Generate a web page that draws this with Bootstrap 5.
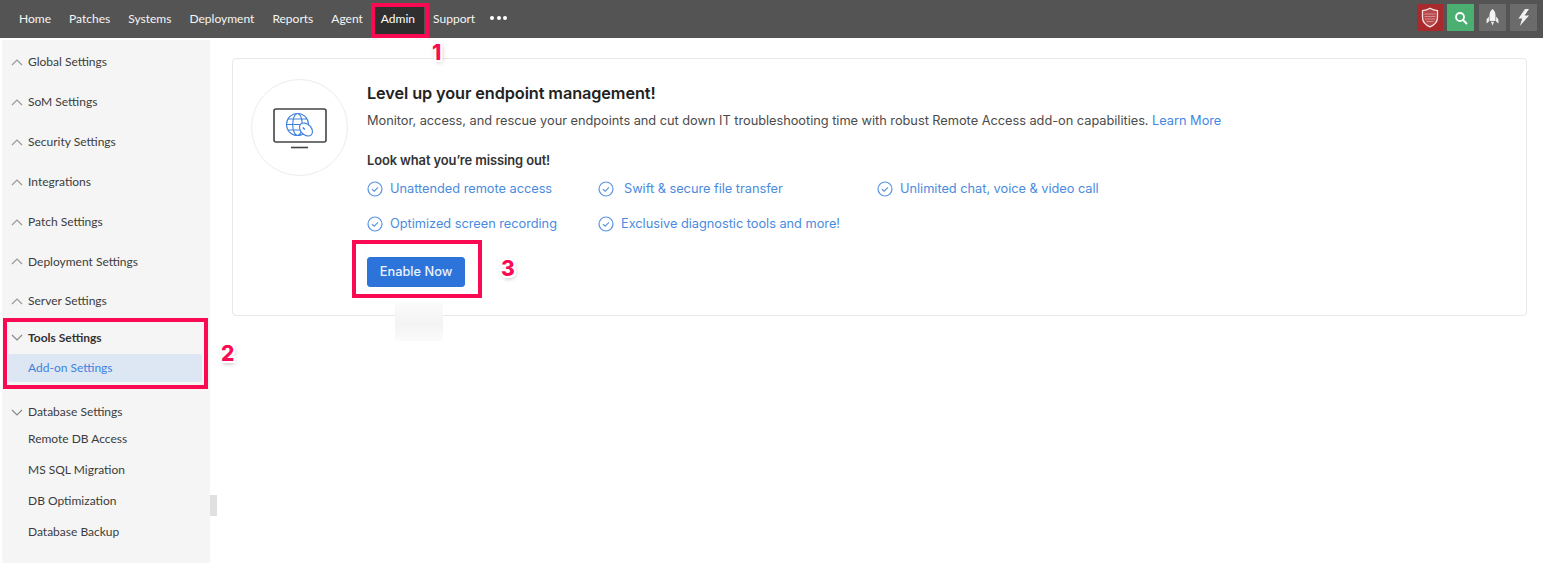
<!DOCTYPE html>
<html lang="en">
<head>
<meta charset="utf-8">
<title>Add-on Settings</title>
<link href="https://cdn.jsdelivr.net/npm/bootstrap@5.3.0/dist/css/bootstrap.min.css" rel="stylesheet">
<style>
html,body{height:563px;overflow:hidden;background:#fff}
body{font-family:"Lato","Liberation Sans",sans-serif;position:relative}
.topbar{height:38px;background:#545454;padding:0 6px 0 10px}
.topnav-link{color:#f4f4f4;font-size:12.02px;padding:0 9px;height:30px;margin-top:4px;line-height:29px;text-decoration:none}
.topnav-link.is-on{background:#2f2f2f;color:#fff}
.dots{display:flex;gap:2.5px;padding:0 6px;margin-top:-3px}
.dots i{width:4px;height:4px;border-radius:50%;background:#fff}
.tool-btn{width:27px;height:27px;background:#6b6b6b;margin-left:4px}
.tool-red{background:#a82a2c;width:26px}
.tool-green{background:#4caf72;margin-right:1px}
.page{height:525px}
.sidebar{width:208px;margin:2px 0 0 2px;background:#f5f5f5;height:523px;flex:none;padding-top:2px}
.side-head{height:40px;padding-left:9px;font-size:12px;color:#3c3c3c}
.side-head svg{flex:none;margin-right:5px}
.side-head.is-short{height:39px}
.side-head.is-tools{height:33px;font-weight:700;color:#333}
.side-head.is-db{height:28px;margin-top:16px}
.side-sub{height:31px;padding-left:26px;font-size:12px;color:#3c3c3c}
.side-sub.is-on{height:28px;margin:0 8px 0 6px;padding-left:20px;background:#dde6f3;color:#3d82de;border-radius:2px}
.side-sub.is-first{margin-top:-3px}
.main-area{padding:20px 16px 0 22px}
.promo{height:258px;border:1px solid #e8e8e8;border-radius:4px;padding:20px 18px;background:#fff;font-family:"Inter","Noto Sans",sans-serif}
.disc{width:97px;height:97px;border:1px solid #ececec;border-radius:50%;flex:none;margin-right:19px}
.promo-title{font-size:16.3px;font-weight:600;color:#222;line-height:20px;margin:4px 0 0;letter-spacing:-.1px}
.promo-text{font-size:12.8px;color:#4b4b4b;line-height:18px;margin:9px 0 0;letter-spacing:-.03px}
.promo-text a{color:#3f87e3;text-decoration:none}
.promo-sub{font-size:12.9px;font-weight:600;color:#333;line-height:18px;margin:22px 0 0;letter-spacing:-.1px}
.feat-row{height:35px;font-size:12.8px;color:#4a8be0;letter-spacing:-.03px}
.feat-row svg{flex:none;margin-right:7px}
.feat-a{width:231px}
.feat-b{width:279px}
.feat-list{margin-top:1px}
.gap-wide svg{margin-right:10px}
.enable{background:#2d74da;color:#eaf2fd;border:1px solid #2d74da;font-size:12.8px;height:30px;width:98px;padding:0;border-radius:3px;margin-top:16px;font-weight:500}
.mark-box{position:absolute;border:4px solid #fb0a54;pointer-events:none}
.mark-num{position:absolute;color:#fb0a54;font-family:"Inter","Liberation Sans",sans-serif;font-weight:800;font-size:21px;line-height:24px;text-shadow:-2px -2px 0 #fff,2px -2px 0 #fff,-2px 2px 0 #fff,2px 2px 0 #fff,0 -2px 0 #fff,0 2px 0 #fff,-2px 0 0 #fff,2px 0 0 #fff,1px 2px 5px rgba(0,0,0,.4)}
.smudge{position:absolute;left:395px;top:303px;width:48px;height:38px;background:linear-gradient(#fbfbfb,#f3f3f3 55%,#fbfbfb)}
.handle{position:absolute;left:210px;top:495px;width:7px;height:21px;background:#e0e0e0}
</style>
</head>
<body>
<nav class="topbar d-flex align-items-start">
  <a class="topnav-link" href="#">Home</a>
  <a class="topnav-link" href="#">Patches</a>
  <a class="topnav-link" href="#">Systems</a>
  <a class="topnav-link" href="#">Deployment</a>
  <a class="topnav-link" href="#">Reports</a>
  <a class="topnav-link" href="#">Agent</a>
  <a class="topnav-link is-on" href="#">Admin</a>
  <a class="topnav-link" href="#">Support</a>
  <span class="dots align-self-center"><i></i><i></i><i></i></span>
  <div class="ms-auto d-flex pt-1 mt-px">
    <div class="tool-btn tool-red d-flex align-items-center justify-content-center">
      <svg width="18" height="21" viewBox="0 0 18 21"><path d="M9 1.200C6.500 2.700 3.800 3.400 1.500 3.600V10.500c0 4.500 3.200 7.500 7.500 9.300 4.300-1.800 7.500-4.800 7.500-9.300V3.600C14.200 3.400 11.500 2.700 9 1.200z" fill="#b6484a" stroke="#f6e6e6" stroke-width="1.300"/><path d="M3.500 7h11M3.500 9.500h11M4 12h10M5.500 14.500h7" stroke="#d88c8c" stroke-width="1"/></svg>
    </div>
    <div class="tool-btn tool-green d-flex align-items-center justify-content-center">
      <svg width="14" height="14" viewBox="0 0 14 14" fill="none" stroke="#fff" stroke-width="1.800"><circle cx="6" cy="6" r="4"/><path d="M9 9l3.500 3.500" stroke-linecap="round"/></svg>
    </div>
    <div class="tool-btn d-flex align-items-center justify-content-center">
      <svg width="13" height="17" viewBox="0 0 13 17" fill="#f2f2f2"><path d="M6.500 0C4.500 1.500 3.500 3.700 3.500 6.500V12h6V6.500C9.500 3.700 8.500 1.500 6.500 0zM2.900 7.500L.6 10.500V14.500L2.900 12.500zM10.100 7.500l2.300 3v4l-2.300-2zM5 12.800h3L6.500 16.500z"/></svg>
    </div>
    <div class="tool-btn d-flex align-items-center justify-content-center">
      <svg width="13" height="17" viewBox="0 0 13 17" fill="#f2f2f2"><path d="M8 0L1.500 9.500h3.800L2.800 17 12 6.500H7.600L12 0z"/></svg>
    </div>
  </div>
</nav>
<div class="page d-flex">
  <aside class="sidebar">
    <div class="side-head d-flex align-items-center"><svg width="12" height="7" viewBox="0 0 12 7" fill="none" stroke="#999" stroke-width="1.200"><path d="M1 6l5-5 5 5"/></svg>Global Settings</div>
    <div class="side-head d-flex align-items-center"><svg width="12" height="7" viewBox="0 0 12 7" fill="none" stroke="#999" stroke-width="1.200"><path d="M1 6l5-5 5 5"/></svg>SoM Settings</div>
    <div class="side-head d-flex align-items-center"><svg width="12" height="7" viewBox="0 0 12 7" fill="none" stroke="#999" stroke-width="1.200"><path d="M1 6l5-5 5 5"/></svg>Security Settings</div>
    <div class="side-head d-flex align-items-center"><svg width="12" height="7" viewBox="0 0 12 7" fill="none" stroke="#999" stroke-width="1.200"><path d="M1 6l5-5 5 5"/></svg>Integrations</div>
    <div class="side-head d-flex align-items-center"><svg width="12" height="7" viewBox="0 0 12 7" fill="none" stroke="#999" stroke-width="1.200"><path d="M1 6l5-5 5 5"/></svg>Patch Settings</div>
    <div class="side-head is-short d-flex align-items-center"><svg width="12" height="7" viewBox="0 0 12 7" fill="none" stroke="#999" stroke-width="1.200"><path d="M1 6l5-5 5 5"/></svg>Deployment Settings</div>
    <div class="side-head d-flex align-items-center"><svg width="12" height="7" viewBox="0 0 12 7" fill="none" stroke="#999" stroke-width="1.200"><path d="M1 6l5-5 5 5"/></svg>Server Settings</div>
    <div class="side-head is-tools d-flex align-items-center"><svg width="12" height="7" viewBox="0 0 12 7" fill="none" stroke="#888" stroke-width="1.200"><path d="M1 1l5 5 5-5"/></svg>Tools Settings</div>
    <div class="side-sub is-on d-flex align-items-center">Add-on Settings</div>
    <div class="side-head is-db d-flex align-items-center"><svg width="12" height="7" viewBox="0 0 12 7" fill="none" stroke="#888" stroke-width="1.200"><path d="M1 1l5 5 5-5"/></svg>Database Settings</div>
    <div class="side-sub is-first d-flex align-items-center">Remote DB Access</div>
    <div class="side-sub d-flex align-items-center">MS SQL Migration</div>
    <div class="side-sub d-flex align-items-center">DB Optimization</div>
    <div class="side-sub d-flex align-items-center">Database Backup</div>
  </aside>
  <main class="main-area flex-grow-1">
    <section class="promo d-flex">
      <div class="disc d-flex align-items-center justify-content-center">
        <svg width="56" height="44" viewBox="0 0 56 44" fill="none">
          <rect x="2" y="3" width="52" height="33" rx="2" stroke="#444" stroke-width="1.600"/>
          <path d="M19 41.500h17" stroke="#444" stroke-width="1.600"/>
          <g stroke="#3f82dc" stroke-width="1.100">
            <circle cx="25.500" cy="18.500" r="11"/>
            <ellipse cx="25.500" cy="18.500" rx="4.800" ry="11"/>
            <path d="M14.500 18.500h22M16 13h19M16 24h19"/>
            <ellipse cx="34" cy="23.500" rx="5.300" ry="7.500" transform="rotate(-45 34 23.500)" fill="#fff"/>
            <path d="M30.800 21.500l2 2" stroke-width="1.500"/>
          </g>
        </svg>
      </div>
      <div class="flex-grow-1">
        <h2 class="promo-title">Level up your endpoint management!</h2>
        <p class="promo-text">Monitor, access, and rescue your endpoints and cut down IT troubleshooting time with robust Remote Access add-on capabilities. <a href="#">Learn More</a></p>
        <p class="promo-sub">Look what you’re missing out!</p>
        <div class="feat-list">
          <div class="feat-row d-flex align-items-center">
            <div class="feat-a d-flex align-items-center"><svg width="16" height="16" viewBox="0 0 16 16" fill="none" stroke="#5a94e2" stroke-width="1.200"><circle cx="8" cy="8" r="7"/><path d="M5 8.200l2.200 2L11 6.300"/></svg>Unattended remote access</div>
            <div class="feat-b gap-wide d-flex align-items-center"><svg width="16" height="16" viewBox="0 0 16 16" fill="none" stroke="#5a94e2" stroke-width="1.200"><circle cx="8" cy="8" r="7"/><path d="M5 8.200l2.200 2L11 6.300"/></svg>Swift &amp; secure file transfer</div>
            <div class="d-flex align-items-center"><svg width="16" height="16" viewBox="0 0 16 16" fill="none" stroke="#5a94e2" stroke-width="1.200"><circle cx="8" cy="8" r="7"/><path d="M5 8.200l2.200 2L11 6.300"/></svg>Unlimited chat, voice &amp; video call</div>
          </div>
          <div class="feat-row d-flex align-items-center">
            <div class="feat-a d-flex align-items-center"><svg width="16" height="16" viewBox="0 0 16 16" fill="none" stroke="#5a94e2" stroke-width="1.200"><circle cx="8" cy="8" r="7"/><path d="M5 8.200l2.200 2L11 6.300"/></svg>Optimized screen recording</div>
            <div class="feat-b d-flex align-items-center"><svg width="16" height="16" viewBox="0 0 16 16" fill="none" stroke="#5a94e2" stroke-width="1.200"><circle cx="8" cy="8" r="7"/><path d="M5 8.200l2.200 2L11 6.300"/></svg>Exclusive diagnostic tools and more!</div>
          </div>
        </div>
        <button type="button" class="btn enable">Enable Now</button>
      </div>
    </section>
  </main>
</div>
<div class="smudge"></div>
<div class="handle"></div>
<div class="mark-box" style="left:371px;top:3px;width:58px;height:35px"></div>
<div class="mark-box" style="left:3px;top:318px;width:205px;height:71px"></div>
<div class="mark-box" style="left:352px;top:240px;width:130px;height:58px"></div>
<span class="mark-num" style="left:432px;top:41px">1</span>
<span class="mark-num" style="left:221px;top:342px">2</span>
<span class="mark-num" style="left:501px;top:257px">3</span>
<script src="https://cdn.jsdelivr.net/npm/bootstrap@5.3.0/dist/js/bootstrap.bundle.min.js"></script>
</body>
</html>
